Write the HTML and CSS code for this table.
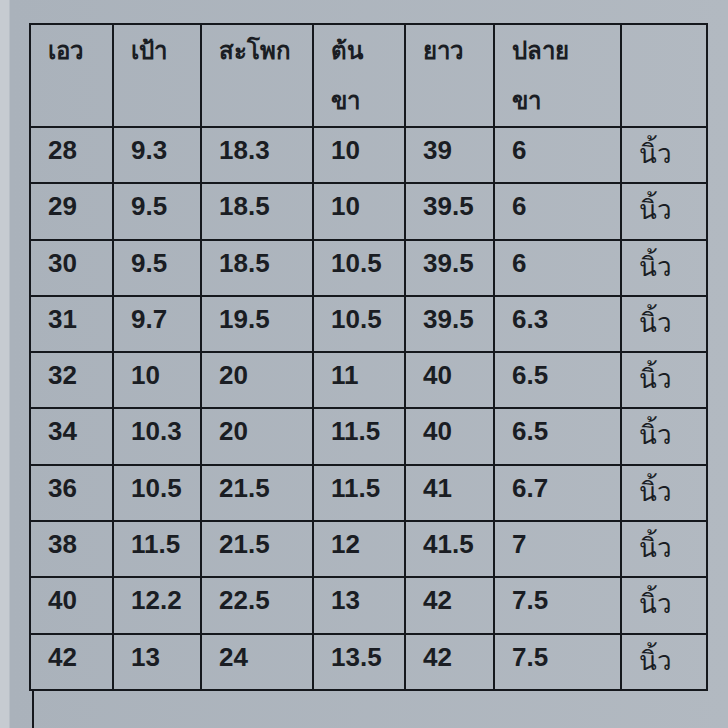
FILE: index.html
```html
<!DOCTYPE html>
<html lang="th">
<head>
<meta charset="utf-8">
<link rel="stylesheet" href="styles.css">
</head>
<body>
<div class="sheet">
  <table class="sizes">
    <colgroup>
      <col class="c1"><col class="c2"><col class="c3"><col class="c4"><col class="c5"><col class="c6"><col class="c7">
    </colgroup>
    <thead>
      <tr>
        <th>เอว</th><th>เป้า</th><th>สะโพก</th><th>ต้น<br>ขา</th><th>ยาว</th><th>ปลาย<br>ขา</th><th></th>
      </tr>
    </thead>
    <tbody>
      <tr><td>28</td><td>9.3</td><td>18.3</td><td>10</td><td>39</td><td>6</td><td class="unit">นิ้ว</td></tr>
      <tr><td>29</td><td>9.5</td><td>18.5</td><td>10</td><td>39.5</td><td>6</td><td class="unit">นิ้ว</td></tr>
      <tr><td>30</td><td>9.5</td><td>18.5</td><td>10.5</td><td>39.5</td><td>6</td><td class="unit">นิ้ว</td></tr>
      <tr><td>31</td><td>9.7</td><td>19.5</td><td>10.5</td><td>39.5</td><td>6.3</td><td class="unit">นิ้ว</td></tr>
      <tr><td>32</td><td>10</td><td>20</td><td>11</td><td>40</td><td>6.5</td><td class="unit">นิ้ว</td></tr>
      <tr><td>34</td><td>10.3</td><td>20</td><td>11.5</td><td>40</td><td>6.5</td><td class="unit">นิ้ว</td></tr>
      <tr><td>36</td><td>10.5</td><td>21.5</td><td>11.5</td><td>41</td><td>6.7</td><td class="unit">นิ้ว</td></tr>
      <tr><td>38</td><td>11.5</td><td>21.5</td><td>12</td><td>41.5</td><td>7</td><td class="unit">นิ้ว</td></tr>
      <tr><td>40</td><td>12.2</td><td>22.5</td><td>13</td><td>42</td><td>7.5</td><td class="unit">นิ้ว</td></tr>
      <tr><td>42</td><td>13</td><td>24</td><td>13.5</td><td>42</td><td>7.5</td><td class="unit">นิ้ว</td></tr>
    </tbody>
  </table>
  <div class="below"></div>
</div>
</body>
</html>
```
FILE: styles.css
```css
html, body {
  margin: 0;
  padding: 0;
  height: 100%;
}
body {
  background: linear-gradient(to right, #c6cbd1 0, #c6cbd1 9px, #aab2bb 10px, #b2b9c1 100%);
  overflow: hidden;
  font-family: "Liberation Sans", "DejaVu Sans", sans-serif;
  color: #1a1d23;
}
.sheet {
  padding: 23px 0 0 29px;
  display: flex;
  flex-direction: column;
  height: 100%;
  box-sizing: border-box;
}
.sizes {
  border-collapse: collapse;
  table-layout: fixed;
  width: 677px;
  border: 2px solid #15181d;
}
.c1 { width: 83px; }
.c2 { width: 88px; }
.c3 { width: 112px; }
.c4 { width: 92px; }
.c5 { width: 89px; }
.c6 { width: 127px; }
.c7 { width: 86px; }
.sizes th, .sizes td {
  border: 2px solid #15181d;
  text-align: left;
  vertical-align: top;
  padding: 0 0 0 17px;
  font-weight: bold;
}
.sizes th {
  line-height: 50px;
  padding-top: 1px;
  padding-bottom: 0;
  font-size: 24px;
}
.sizes td {
  height: 56.3px;
  line-height: 28px;
  padding-top: 8px;
  box-sizing: border-box;
  font-size: 26px;
}
.sizes td.unit {
  font-weight: normal;
  padding-top: 12px;
  font-size: 26px;
}
.below {
  flex: 1;
  margin-left: 3px;
  border-left: 2px solid #15181d;
}
```
